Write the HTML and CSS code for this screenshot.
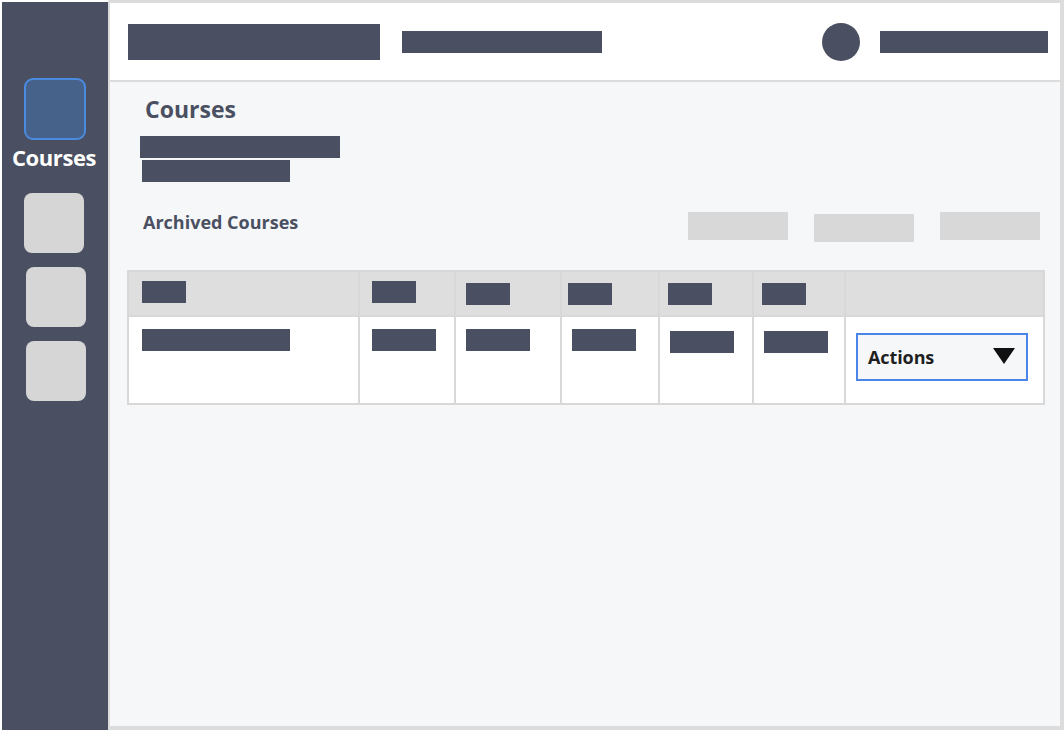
FILE: index.html
```html
<!DOCTYPE html>
<html lang="en">
<head>
<meta charset="utf-8">
<title>Courses</title>
<link rel="stylesheet" href="styles.css">
</head>
<body>
<div class="app">
  <aside class="sidebar">
    <div class="nav-item active"></div>
    <div class="nav-label">Courses</div>
    <div class="nav-item plain first"></div>
    <div class="nav-item plain"></div>
    <div class="nav-item plain"></div>
  </aside>
  <main class="main">
    <header class="topbar">
      <div class="ph ph-logo"></div>
      <div class="ph ph-nav"></div>
      <div class="spacer"></div>
      <div class="avatar"></div>
      <div class="ph ph-user"></div>
    </header>
    <section class="content">
      <h1 class="title">Courses</h1>
      <div class="ph ph-sub1"></div>
      <div class="ph ph-sub2"></div>
      <div class="toolbar">
        <h2 class="subtitle">Archived Courses</h2>
        <div class="buttons">
          <div class="btn"></div>
          <div class="btn btn-low"></div>
          <div class="btn"></div>
        </div>
      </div>
      <table class="grid">
        <colgroup>
          <col class="c1"><col class="c2"><col class="c3"><col class="c4"><col class="c5"><col class="c6"><col class="c7">
        </colgroup>
        <thead>
          <tr>
            <th><div class="ph ph-h"></div></th>
            <th class="p13"><div class="ph ph-h"></div></th>
            <th class="p11"><div class="ph ph-h low"></div></th>
            <th class="p7"><div class="ph ph-h low"></div></th>
            <th class="p9"><div class="ph ph-h low"></div></th>
            <th class="p9"><div class="ph ph-h low"></div></th>
            <th></th>
          </tr>
        </thead>
        <tbody>
          <tr>
            <td><div class="ph ph-name"></div></td>
            <td class="p13"><div class="ph ph-cell"></div></td>
            <td class="p11"><div class="ph ph-cell"></div></td>
            <td class="p11"><div class="ph ph-cell"></div></td>
            <td class="p11"><div class="ph ph-cell low"></div></td>
            <td class="p11"><div class="ph ph-cell low"></div></td>
            <td class="p11">
              <div class="actions">
                <span>Actions</span>
                <svg class="caret" width="22" height="16" viewBox="0 0 22 16"><polygon points="0,0 22,0 11,16" fill="#111"/></svg>
              </div>
            </td>
          </tr>
        </tbody>
      </table>
    </section>
  </main>
</div>
</body>
</html>
```
FILE: styles.css
```css
* { box-sizing: border-box; }
html, body { margin: 0; padding: 0; }
body {
  background: #ffffff;
  font-family: "Open Sans", "Liberation Sans", sans-serif;
}
.app {
  width: 1064px;
  height: 730px;
  display: flex;
}
.sidebar {
  flex: 0 0 106px;
  width: 106px;
  margin: 2px 0 0 2px;
  background: #4a5061;
  display: flex;
  flex-direction: column;
  align-items: center;
  padding-top: 76px;
}
.nav-item {
  width: 60px;
  height: 60px;
  border-radius: 8px;
  background: #d6d6d6;
  flex: 0 0 auto;
}
.nav-item.active {
  width: 62px;
  height: 62px;
  background: #46618a;
  border: 2px solid #4a8be0;
  border-radius: 9px;
}
.nav-item.plain { margin-top: 14px; margin-left: 2px; }
.nav-item.plain.first { margin-top: 23px; margin-left: 0; margin-right: 2px; }
.nav-label {
  color: #ffffff;
  font-weight: 700;
  font-size: 22px;
  line-height: 26px;
  margin-top: 4px;
  margin-right: 2px;
  letter-spacing: -0.4px;
}
.main {
  flex: 1 1 auto;
  min-width: 0;
  display: flex;
  flex-direction: column;
  background: #f6f7f9;
  border-style: solid;
  border-color: #dcdcdc;
  border-width: 3px 4px 4px 2px;
}
.topbar {
  height: 79px;
  flex: 0 0 auto;
  background: #ffffff;
  border-bottom: 2px solid #dcdcdc;
  display: flex;
  align-items: center;
  padding: 0 12px 0 18px;
}
.ph { background: #4a5061; }
.ph-logo { width: 252px; height: 36px; }
.ph-nav { width: 200px; height: 22px; margin-left: 22px; }
.spacer { flex: 1; }
.avatar { width: 38px; height: 38px; border-radius: 50%; background: #4a5061; }
.ph-user { width: 168px; height: 22px; margin-left: 20px; }
.content {
  padding: 0 16px 0 18px;
}
.title {
  margin: 12px 0 0 17px;
  font-size: 23px;
  line-height: 30px;
  font-weight: 700;
  color: #4a5061;
}
.ph-sub1 { width: 200px; height: 22px; margin: 12px 0 0 12px; }
.ph-sub2 { width: 148px; height: 22px; margin: 2px 0 0 14px; }
.toolbar {
  display: flex;
  justify-content: space-between;
  align-items: flex-start;
  margin-top: 30px;
  padding-right: 4px;
}
.subtitle {
  margin: -3px 0 0 15px;
  font-size: 18px;
  line-height: 26px;
  font-weight: 700;
  color: #4a5061;
  letter-spacing: 0;
}
.buttons { display: flex; gap: 26px; }
.btn { width: 100px; height: 28px; background: #d8d8d8; }
.btn-low { margin-top: 2px; }
.grid {
  margin-top: 28px;
  margin-left: -1px;
  width: 916px;
  border-collapse: collapse;
  table-layout: fixed;
  border: 2px solid #dcdcdc;
}
.c1 { width: 231px; }
.c2 { width: 96px; }
.c3 { width: 106px; }
.c4 { width: 98px; }
.c5 { width: 94px; }
.c6 { width: 92px; }
.c7 { width: 199px; }
.grid th, .grid td {
  border: 2px solid #d8d8d8;
  padding: 0 0 0 13px;
  vertical-align: top;
  text-align: left;
}
.grid th { background: #dedede; height: 45px; padding-top: 9px; }
.grid td { background: #ffffff; height: 88px; padding-top: 12px; }
.grid .p13 { padding-left: 12px; }
.grid .p11 { padding-left: 10px; }
.grid .p7 { padding-left: 6px; }
.grid .p9 { padding-left: 8px; }
.ph-h { width: 44px; height: 22px; }
.ph-h.low { margin-top: 2px; }
.ph-name { width: 148px; height: 22px; }
.ph-cell { width: 64px; height: 22px; }
.ph-cell.low { margin-top: 2px; }
.actions {
  width: 172px;
  height: 48px;
  margin-top: 4px;
  border: 2px solid #4a86e8;
  background: #f6f7f9;
  display: flex;
  align-items: center;
  justify-content: space-between;
  padding: 0 11px 0 10px;
}
.actions span {
  font-size: 18px;
  font-weight: 700;
  color: #1f1f1f;
  letter-spacing: -0.1px;
}
.caret { display: block; margin-top: -2px; }
```
